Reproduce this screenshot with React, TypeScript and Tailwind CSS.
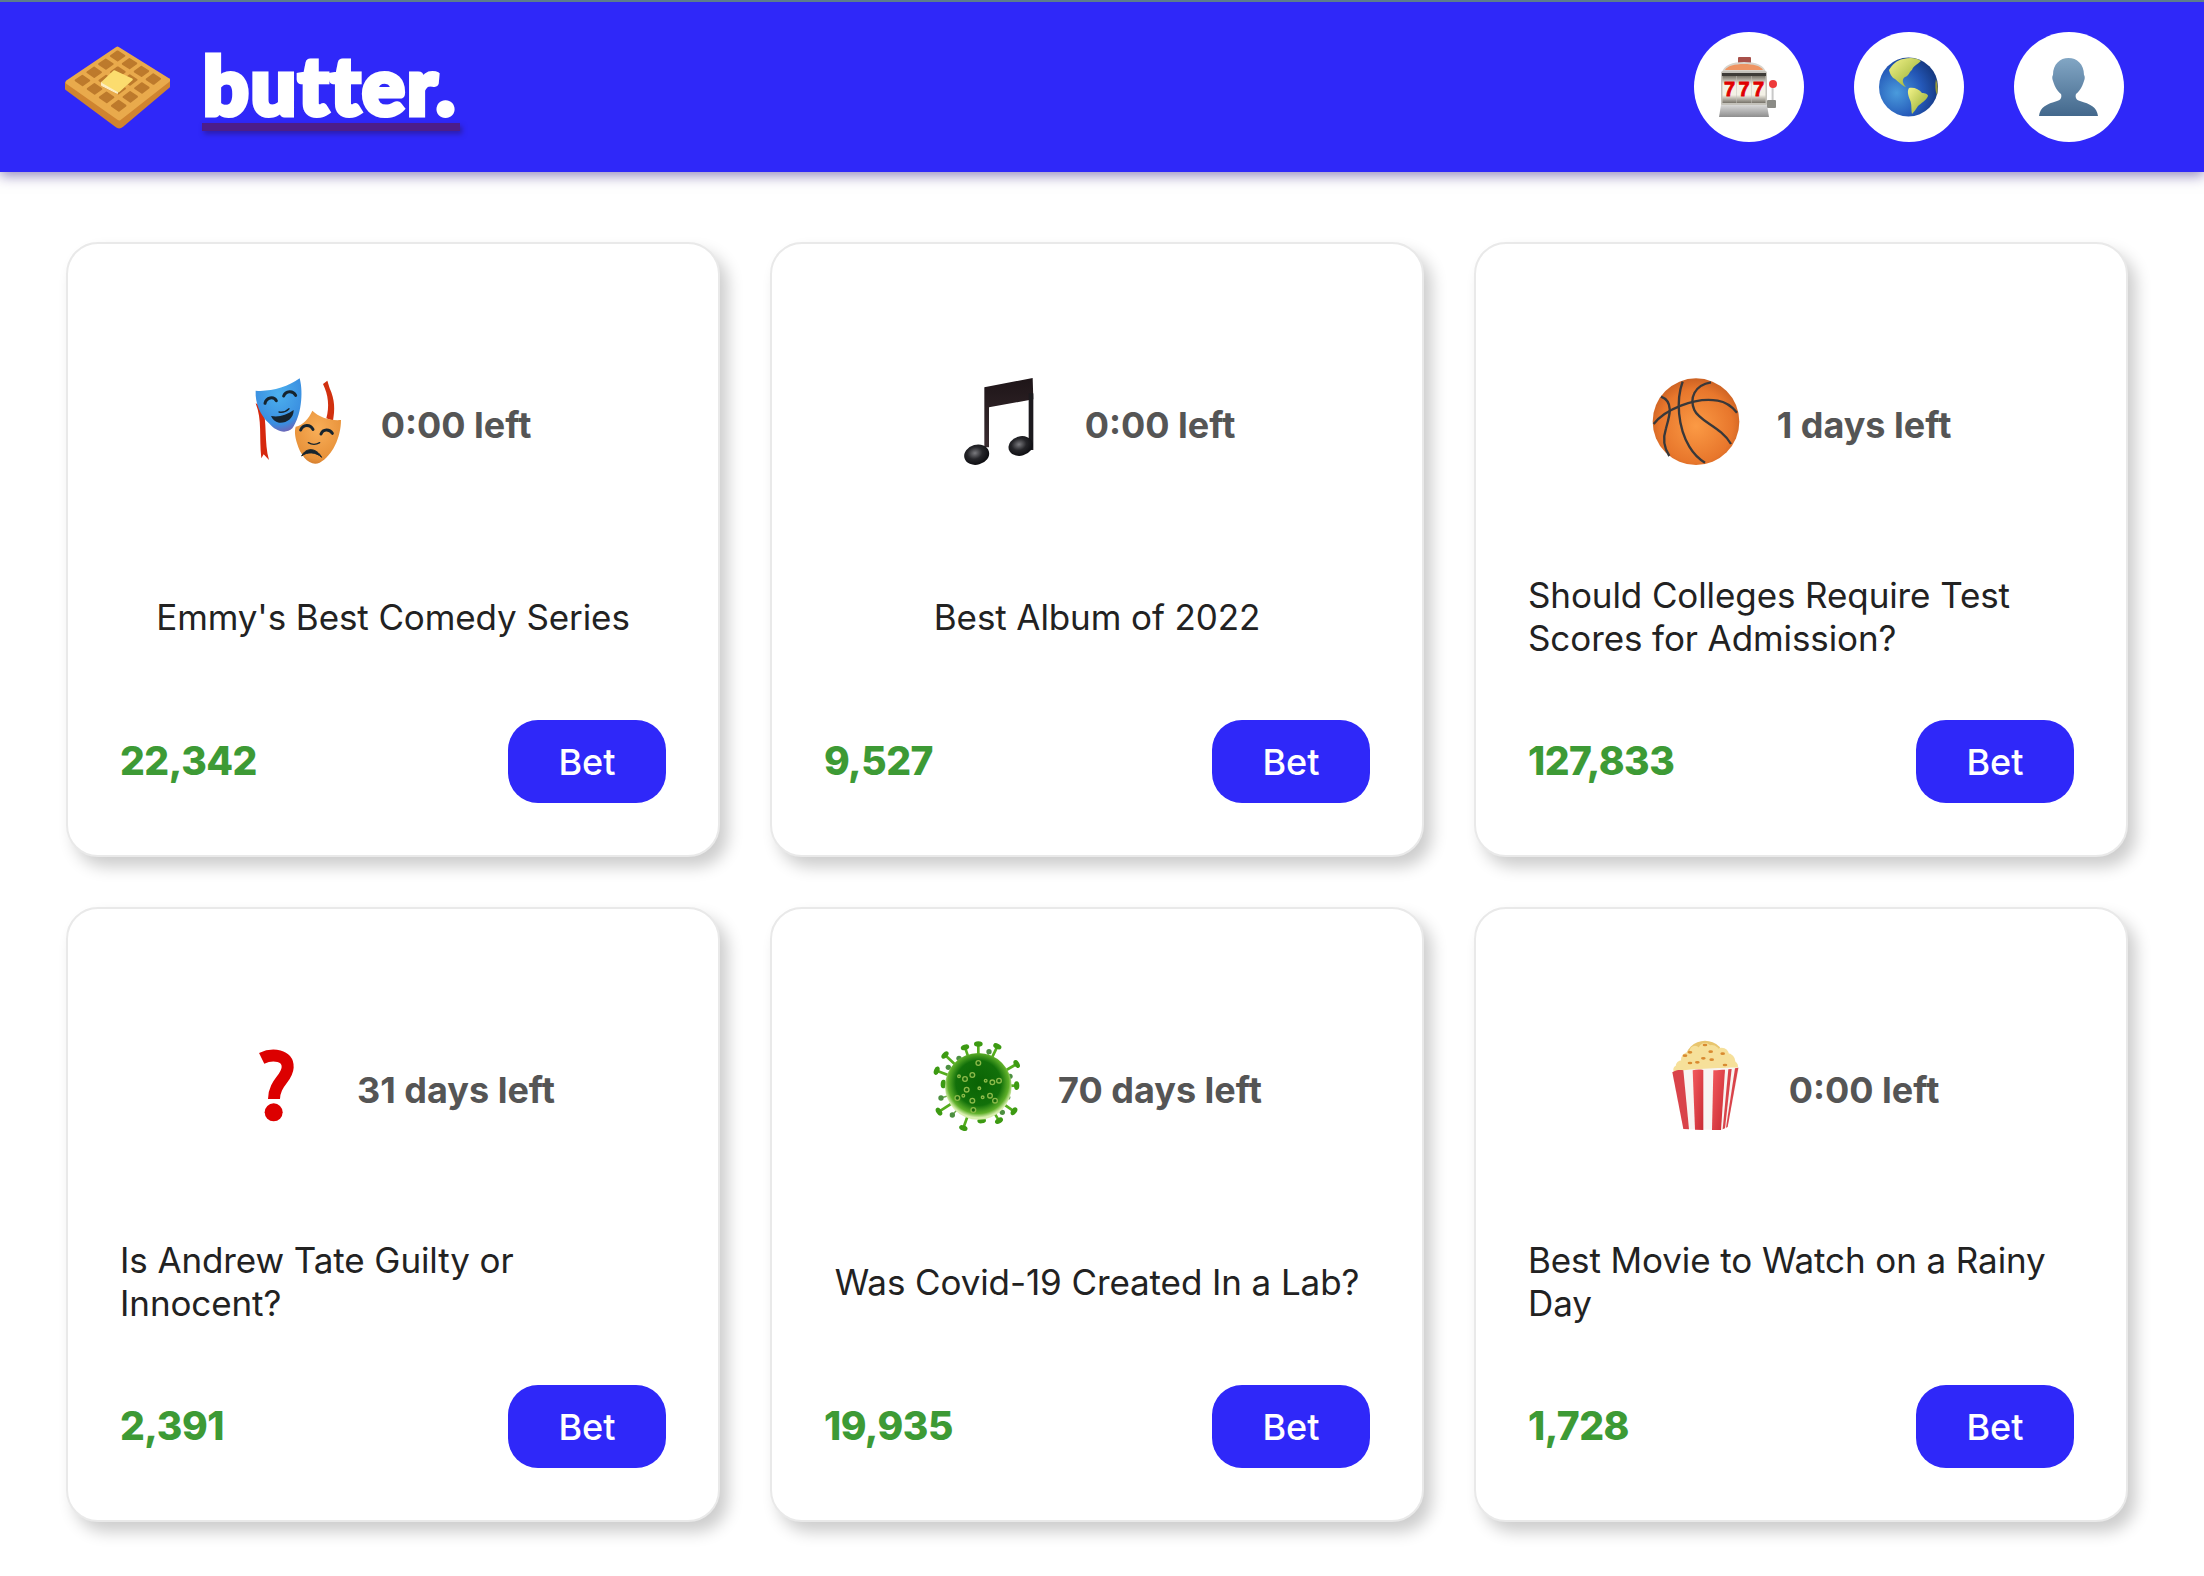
const bets = [
  { icon: "masks", left: "0:00 left", title: "Emmy's Best Comedy Series", amount: "22,342" },
  { icon: "music", left: "0:00 left", title: "Best Album of 2022", amount: "9,527" },
  { icon: "ball", left: "1 days left", title: "Should Colleges Require Test Scores for Admission?", amount: "127,833" },
  { icon: "question", left: "31 days left", title: "Is Andrew Tate Guilty or Innocent?", amount: "2,391" },
  { icon: "virus", left: "70 days left", title: "Was Covid-19 Created In a Lab?", amount: "19,935" },
  { icon: "popcorn", left: "0:00 left", title: "Best Movie to Watch on a Rainy Day", amount: "1,728" },
];

function Waffle() {
  const T = [200, 52];
  const R = [357, 152];
  const B = [205, 272];
  const L = [45, 158];
  const pt = (u: number, v: number) => {
    const x = T[0] * (1 - u) * (1 - v) + R[0] * u * (1 - v) + B[0] * u * v + L[0] * (1 - u) * v;
    const y = T[1] * (1 - u) * (1 - v) + R[1] * u * (1 - v) + B[1] * u * v + L[1] * (1 - u) * v;
    return x.toFixed(1) + "," + y.toFixed(1);
  };
  const cells: string[] = [];
  for (let i = 0; i < 4; i++) {
    for (let j = 0; j < 4; j++) {
      const a = 0.065 + i * 0.228;
      const b = 0.065 + j * 0.228;
      const s = 0.13;
      cells.push([pt(a, b), pt(a + s, b), pt(a + s, b + s), pt(a, b + s)].join(" "));
    }
  }
  return (
    <svg viewBox="42 50 316 248" className="w-[105px] h-[83px] shrink-0">
      <path d="M45 160 L45 178 L195 290 Q205 298 215 290 L355 172 L357 150 L205 256 Z" fill="#cf8430" stroke="#cf8430" strokeWidth="6" strokeLinejoin="round" />
      <polygon points="200,58 351,152 205,266 51,158" fill="#e9aa4c" stroke="#e9aa4c" strokeWidth="14" strokeLinejoin="round" />
      {cells.map((c) => (
        <polygon key={c} points={c} fill="#bd7a2c" stroke="#bd7a2c" strokeWidth="6" strokeLinejoin="round" />
      ))}
      <polygon points="152,160 155,172 200,192 245,153 240,148 200,180" fill="#a86a24" opacity="0.5" />
      <polygon points="152,158 152,168 200,192 200,178" fill="#fdeec2" stroke="#fdeec2" strokeWidth="3" strokeLinejoin="round" />
      <polygon points="190,125 243,150 203,186 155,158" fill="#fbdc6e" stroke="#fbdc6e" strokeWidth="6" strokeLinejoin="round" />
    </svg>
  );
}

function SlotIcon() {
  return (
    <svg viewBox="0 0 60 60" className="w-[60px] h-[60px]">
      <defs>
        <linearGradient id="reel" x1="0" y1="0" x2="0" y2="1">
          <stop offset="0" stopColor="#77736a" />
          <stop offset="0.3" stopColor="#f4f1e6" />
          <stop offset="0.7" stopColor="#f4f1e6" />
          <stop offset="1" stopColor="#77736a" />
        </linearGradient>
        <linearGradient id="base" x1="0" y1="0" x2="0" y2="1">
          <stop offset="0" stopColor="#d8d8d8" />
          <stop offset="1" stopColor="#8e8e8e" />
        </linearGradient>
      </defs>
      <rect x="19" y="0" width="13" height="7" rx="1" fill="#a8504a" />
      <path d="M3 16 C4 8 14 5 25 5 C36 5 46 8 47 16 Z" fill="#d8d4cc" />
      <path d="M6 13 C8 9 16 7 25 7 C34 7 42 9 44 13 Z" fill="#ee9463" />
      <rect x="2" y="14" width="46" height="35" rx="2" fill="#c4c2bb" />
      <rect x="3" y="16" width="44" height="3" fill="#3e3c38" />
      <rect x="3.5" y="19" width="14" height="27" fill="url(#reel)" />
      <rect x="18" y="19" width="14" height="27" fill="url(#reel)" />
      <rect x="32.5" y="19" width="14" height="27" fill="url(#reel)" />
      <text x="10.5" y="39" textAnchor="middle" fontFamily="Liberation Sans, sans-serif" fontWeight="700" fontSize="20" fill="#e00000" stroke="#e00000" strokeWidth="0.8">7</text>
      <text x="25" y="39" textAnchor="middle" fontFamily="Liberation Sans, sans-serif" fontWeight="700" fontSize="20" fill="#e00000" stroke="#e00000" strokeWidth="0.8">7</text>
      <text x="39.5" y="39" textAnchor="middle" fontFamily="Liberation Sans, sans-serif" fontWeight="700" fontSize="20" fill="#e00000" stroke="#e00000" strokeWidth="0.8">7</text>
      <path d="M2 48 L48 48 L50 60 L0 60 Z" fill="url(#base)" />
      <rect x="52.6" y="28" width="2" height="16" fill="#c9c9c9" />
      <rect x="48" y="43" width="9" height="8" rx="1" fill="#8b8b86" />
      <circle cx="54" cy="27" r="4" fill="#ee3a3a" />
    </svg>
  );
}

function GlobeIcon() {
  return (
    <svg viewBox="0 0 60 60" className="w-[60px] h-[60px]">
      <defs>
        <radialGradient id="sea" cx="0.3" cy="0.6" r="0.8">
          <stop offset="0" stopColor="#4a9bdc" />
          <stop offset="0.55" stopColor="#2458b8" />
          <stop offset="1" stopColor="#112f70" />
        </radialGradient>
        <linearGradient id="land" x1="0" y1="0" x2="1" y2="1">
          <stop offset="0" stopColor="#f4f48a" />
          <stop offset="1" stopColor="#8fa82e" />
        </linearGradient>
      </defs>
      <circle cx="29.5" cy="30" r="29.5" fill="url(#sea)" />
      <path d="M10 13 C13 8 18 3 24 2 C32 0 38 1 42 4 C38 8 34 9 33 13 C30 15 30 19 26 20 C23 22 23 26 27 30 C23 29 20 25 16 22 C12 20 11 16 10 13 Z" fill="url(#land)" />
      <path d="M30 31 C35 30 40 32 43 36 C46 36 49 37 49 39 C47 44 42 46 39 49 C37 52 35 55 33 57 C32 52 33 47 31 43 C29 38 28 34 30 31 Z" fill="url(#land)" />
      <path d="M57 22 C59 28 59 34 58 38 C56 34 56 27 57 22 Z" fill="#9a9a34" />
    </svg>
  );
}

function PersonIcon() {
  return (
    <svg viewBox="0 0 60 60" className="w-[60px] h-[60px]">
      <defs>
        <linearGradient id="person" x1="0" y1="0" x2="0" y2="1">
          <stop offset="0" stopColor="#82a6c4" />
          <stop offset="1" stopColor="#43688c" />
        </linearGradient>
      </defs>
      <path
        d="M0 59 C1 50 8 47 18 44 C22 43 23 40 22 37 C17 33 15 27 14 24 C13 22 13 19 14 18 C14 7 21 1 29.5 1 C38 1 45 7 45 18 C46 19 46 22 45 24 C44 27 42 33 37 37 C36 40 37 43 41 44 C51 47 58 50 59 59 Z"
        fill="url(#person)"
      />
    </svg>
  );
}

function MasksIcon() {
  return (
    <svg viewBox="78 57 270 270" className="w-[90px] h-[90px] overflow-visible">
      <defs>
        <radialGradient id="mblue" cx="0.5" cy="0.3" r="0.8">
          <stop offset="0" stopColor="#4cb0ee" />
          <stop offset="0.7" stopColor="#3a8ee0" />
          <stop offset="1" stopColor="#8a4fa0" />
        </radialGradient>
        <radialGradient id="morange" cx="0.5" cy="0.35" r="0.8">
          <stop offset="0" stopColor="#f8ae58" />
          <stop offset="0.7" stopColor="#e8923a" />
          <stop offset="1" stopColor="#b8621e" />
        </radialGradient>
      </defs>
      <path d="M80 130 C100 180 90 230 97 295 L104 283 L120 300 C105 250 115 180 100 140 Z" fill="#d6280e" />
      <path d="M282 72 L295 62 L302 85 C318 120 318 150 312 182 L292 175 C302 140 298 105 282 72 Z" fill="#d1300f" />
      <path d="M250 152 C270 172 305 183 336 180 C336 232 310 288 272 308 C245 322 215 290 204 250 C198 228 196 215 200 200 C222 195 240 175 250 152 Z" fill="url(#morange)" />
      <path d="M80 92 C122 96 176 82 212 55 C224 100 216 170 190 205 C170 224 140 214 120 190 C94 165 78 130 80 92 Z" fill="url(#mblue)" />
      <g fill="none" stroke="#16242e" strokeWidth="9" strokeLinecap="round">
        <path d="M108 130 C112 112 134 108 142 122" />
        <path d="M164 108 C170 92 192 90 200 106" />
        <path d="M215 210 C222 192 244 192 252 208" />
        <path d="M276 222 C282 206 302 206 310 220" />
        <path d="M238 248 C248 254 262 254 272 248" strokeWidth="4" />
        <path d="M150 156 C160 158 172 154 180 146" strokeWidth="4" />
      </g>
      <path d="M126 168 C150 172 172 166 194 150 C194 176 172 190 150 188 C138 186 130 178 126 168 Z" fill="#16242e" />
      <path d="M218 288 C230 262 262 262 278 292 C262 276 234 274 218 288 Z" fill="#16242e" stroke="#16242e" strokeWidth="3" strokeLinejoin="round" />
    </svg>
  );
}

function MusicIcon() {
  return (
    <svg viewBox="117 57 270 270" className="w-[90px] h-[90px] overflow-visible">
      <defs>
        <radialGradient id="note" cx="0.45" cy="0.4" r="0.6">
          <stop offset="0" stopColor="#7a7a7e" />
          <stop offset="0.5" stopColor="#26262a" />
          <stop offset="1" stopColor="#0c0c10" />
        </radialGradient>
        <linearGradient id="beam" x1="0" y1="0" x2="0" y2="1">
          <stop offset="0" stopColor="#1e1518" />
          <stop offset="1" stopColor="#3a2c30" />
        </linearGradient>
      </defs>
      <path d="M193 82 L338 54 L340 118 L207 142 L207 262 L193 262 Z" fill="url(#beam)" />
      <rect x="326" y="100" width="14" height="170" fill="#1c1a1e" />
      <ellipse cx="170" cy="284" rx="38" ry="30" transform="rotate(-15 170 284)" fill="url(#note)" />
      <ellipse cx="302" cy="258" rx="37" ry="29" transform="rotate(-15 302 258)" fill="url(#note)" />
    </svg>
  );
}

function BallIcon() {
  return (
    <svg viewBox="60 57 270 270" className="w-[90px] h-[90px] overflow-visible">
      <defs>
        <radialGradient id="ball" cx="0.5" cy="0.55" r="0.6">
          <stop offset="0" stopColor="#fb9a45" />
          <stop offset="0.7" stopColor="#e8772c" />
          <stop offset="1" stopColor="#c25a20" />
        </radialGradient>
      </defs>
      <circle cx="195" cy="185" r="130" fill="url(#ball)" />
      <g fill="none" stroke="#38383a" strokeWidth="7">
        <path d="M68 192 C100 150 190 110 260 122 C285 126 305 142 318 158" />
        <path d="M155 65 C135 120 140 200 175 260 C187 280 205 298 222 308" />
        <path d="M90 110 C130 125 115 170 105 205 C95 235 100 265 115 288" />
        <path d="M240 67 C190 75 175 115 190 150 C205 185 270 200 300 252" />
      </g>
    </svg>
  );
}

function QuestionIcon() {
  return (
    <svg viewBox="0 45 270 270" className="w-[90px] h-[90px] overflow-visible">
      <path d="M92 88 C125 72 172 78 170 115 C168 150 130 160 129 210" fill="none" stroke="#dc0000" strokeWidth="36" />
      <circle cx="128" cy="250" r="27" fill="#dc0000" />
    </svg>
  );
}

function VirusIcon() {
  const spikes = [
    [190, 45], [247, 52], [305, 105], [305, 170], [297, 247], [252, 275],
    [200, 275], [145, 297], [72, 248], [85, 165], [65, 125], [90, 78], [150, 55],
  ];
  const small = [
    [222, 68], [285, 142], [278, 205], [262, 250], [112, 258], [78, 207], [100, 115], [132, 88],
  ];
  const spots = [
    [190, 102], [172, 138], [212, 155], [252, 155], [155, 182], [193, 178], [127, 207], [172, 215],
    [203, 205], [240, 215], [175, 243], [132, 142], [232, 160], [150, 150], [145, 200], [225, 200],
  ];
  const headAngle = (x: number, y: number) => (Math.atan2(y - 172, x - 190) * 180) / Math.PI;
  return (
    <svg viewBox="51 45 270 270" className="w-[90px] h-[90px] overflow-visible">
      <defs>
        <radialGradient id="virus" cx="0.5" cy="0.45" r="0.52">
          <stop offset="0" stopColor="#0a6304" />
          <stop offset="0.65" stopColor="#12700a" />
          <stop offset="0.88" stopColor="#5fb02a" />
          <stop offset="1" stopColor="#d9efb0" />
        </radialGradient>
      </defs>
      {spikes.map(([x, y]) => (
        <g key={x + "-" + y}>
          <line x1="190" y1="172" x2={x} y2={y} stroke="#55ad1e" strokeWidth="8" />
          <ellipse cx={x} cy={y} rx="8" ry="13" fill="#3c9a12" transform={`rotate(${headAngle(x, y)} ${x} ${y})`} />
        </g>
      ))}
      {small.map(([x, y]) => (
        <g key={x + "-" + y}>
          <line x1="190" y1="172" x2={x} y2={y} stroke="#6aa84a" strokeWidth="4" />
          <circle cx={x} cy={y} r="8" fill="#4c8f40" />
        </g>
      ))}
      <circle cx="190" cy="172" r="100" fill="url(#virus)" />
      {spots.map(([x, y], i) => (
        <circle key={x + "-" + y} cx={x} cy={y} r={i % 3 === 2 ? 4 : 7} fill="#176a0c" stroke="#8dbb4a" strokeWidth="4" />
      ))}
    </svg>
  );
}

function PopcornIcon() {
  const kernels = [
    [125, 112, 18], [145, 92, 22], [165, 115, 22], [195, 62, 20], [175, 82, 22], [215, 72, 24], [225, 97, 26],
    [245, 78, 22], [262, 97, 24], [278, 112, 16], [195, 108, 24], [235, 118, 20], [255, 118, 20], [140, 118, 22],
    [165, 66, 16], [112, 122, 12], [200, 84, 20], [152, 108, 18],
  ];
  const seeds = [
    [195, 48], [150, 70], [212, 68], [135, 80], [248, 74], [150, 102], [190, 88], [215, 92], [172, 100], [255, 108],
  ];
  return (
    <svg viewBox="69 45 270 270" className="w-[90px] h-[90px] overflow-visible">
      <defs>
        <linearGradient id="red" x1="0" y1="0" x2="1" y2="1">
          <stop offset="0" stopColor="#f35a5e" />
          <stop offset="1" stopColor="#c92a33" />
        </linearGradient>
      </defs>
      <circle cx="195" cy="95" r="60" fill="#e8c56e" />
      {kernels.map(([x, y, r]) => (
        <circle key={x + "-" + y} cx={x} cy={y} r={r} fill="#f6e09a" />
      ))}
      {seeds.map(([x, y]) => (
        <ellipse key={x + "-" + y} cx={x} cy={y} rx="7" ry="4" fill="#d98a30" />
      ))}
      <path d="M97 130 C140 118 240 118 298 115 L262 295 L245 303 L135 300 Z" fill="#f8f4f2" />
      <path d="M97 130 C108 122 122 122 130 124 L147 301 L130 300 Z" fill="#d9434a" />
      <path d="M158 124 C168 121 180 121 190 123 L190 303 L165 302 Z" fill="url(#red)" />
      <path d="M220 124 C232 123 245 122 255 122 L243 303 L216 303 Z" fill="url(#red)" />
      <path d="M265 121 L275 120 L255 298 L248 301 Z" fill="#d9434a" />
      <path d="M285 118 L295 116 L263 294 L258 296 Z" fill="#d9434a" />
    </svg>
  );
}

const icons: Record<string, () => React.ReactElement> = {
  masks: MasksIcon,
  music: MusicIcon,
  ball: BallIcon,
  question: QuestionIcon,
  virus: VirusIcon,
  popcorn: PopcornIcon,
};

function BetCard({ icon, left, title, amount }: { icon: string; left: string; title: string; amount: string }) {
  const Icon = icons[icon];
  return (
    <div className="flex h-[615px] flex-col rounded-[32px] border-2 border-[#e9e9e9] bg-white px-[52px] pt-[135px] pb-[52px] shadow-[8px_10px_16px_rgba(0,0,0,0.2)]">
      <div className="flex h-[90px] items-center justify-center gap-[36px]">
        <Icon />
        <span className="pt-[2px] text-[36px] font-bold text-[#555555]">{left}</span>
      </div>
      <div className="mt-[105px] flex h-[86px] items-center justify-center">
        <p className="text-[35px] leading-[43px] tracking-[-0.1px] text-[#222222]">{title}</p>
      </div>
      <div className="mt-[60px] flex h-[83px] items-center justify-between">
        <span className="text-[39px] font-extrabold tracking-[-0.5px] text-[#3d9a35]">{amount}</span>
        <button className="flex h-[83px] w-[158px] items-center justify-center rounded-[30px] bg-[#2f28f9] text-[36px] font-medium text-white">
          Bet
        </button>
      </div>
    </div>
  );
}

export default function App() {
  return (
    <div className="min-h-screen bg-white font-['Inter',sans-serif]">
      <header className="flex h-[172px] items-center justify-between border-t-2 border-[#5d7d8c] bg-[#2f28f9] pr-[80px] pl-[65px] shadow-[0_4px_12px_rgba(50,30,130,0.5)]">
        <div className="flex items-center gap-[32px]">
          <Waffle />
          <div className="flex flex-col items-stretch pt-[8px]">
            <span className="h-[72px] pr-[3px] pl-[1px] font-['Lato',sans-serif] text-[80px] leading-[66px] font-black tracking-[2px] text-white [-webkit-text-stroke:5px_white] [paint-order:stroke_fill]">
              butter.
            </span>
            <div className="h-[8px] bg-[#4c1d8a] shadow-[2px_3px_5px_rgba(40,20,100,0.5)]" />
          </div>
        </div>
        <div className="flex items-center gap-[50px]">
          <div className="flex h-[110px] w-[110px] items-center justify-center rounded-full bg-white">
            <SlotIcon />
          </div>
          <div className="flex h-[110px] w-[110px] items-center justify-center rounded-full bg-white">
            <GlobeIcon />
          </div>
          <div className="flex h-[110px] w-[110px] items-center justify-center rounded-full bg-white">
            <PersonIcon />
          </div>
        </div>
      </header>
      <main className="grid grid-cols-[repeat(3,654px)] gap-[50px] pt-[70px] pb-[55px] pl-[66px]">
        {bets.map((b) => (
          <BetCard key={b.title} {...b} />
        ))}
      </main>
    </div>
  );
}
